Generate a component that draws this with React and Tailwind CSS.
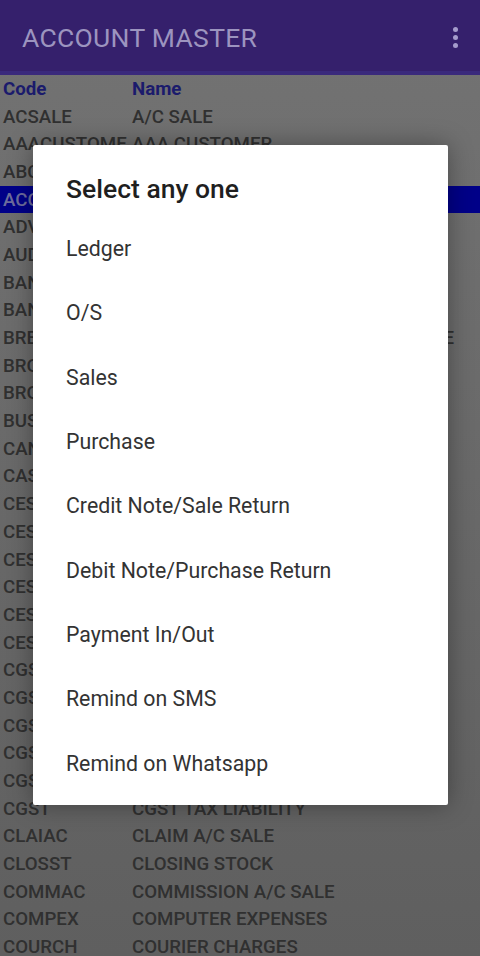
import React from "react";

const rows = [
  ["ACSALE", "A/C SALE"],
  ["AAACUSTOME", "AAA CUSTOMER"],
  ["ABCDEF", "ABC TRADERS"],
  ["ACCINT", "ACCRUED INTEREST"],
  ["ADVEXP", "ADVERTISEMENT EXP"],
  ["AUDFEE", "AUDIT FEES"],
  ["BANKCH", "BANK CHARGES"],
  ["BANKIN", "BANK INTEREST"],
  ["BREAKG", "BREAKAGES AND\u00A0 LEAKAGE EXPENSE"],
  ["BROKER", "BROKERAGE"],
  ["BROKRG", "BROKERAGE PAID"],
  ["BUSPRO", "BUSINESS PROMOTION"],
  ["CANTEE", "CANTEEN EXPENSES"],
  ["CASH", "CASH"],
  ["CESS01", "CESS PAYABLE"],
  ["CESS02", "CESS RECEIVABLE"],
  ["CESS03", "CESS INPUT"],
  ["CESS04", "CESS OUTPUT"],
  ["CESS05", "CESS TAX"],
  ["CESS06", "CESS LIABILITY"],
  ["CGST01", "CGST PAYABLE"],
  ["CGST02", "CGST RECEIVABLE"],
  ["CGST03", "CGST INPUT"],
  ["CGST04", "CGST OUTPUT"],
  ["CGST05", "CGST TAX"],
  ["CGST", "CGST TAX LIABILITY"],
  ["CLAIAC", "CLAIM A/C SALE"],
  ["CLOSST", "CLOSING STOCK"],
  ["COMMAC", "COMMISSION A/C SALE"],
  ["COMPEX", "COMPUTER EXPENSES"],
  ["COURCH", "COURIER CHARGES"],
];

const options = [
  "Ledger",
  "O/S",
  "Sales",
  "Purchase",
  "Credit Note/Sale Return",
  "Debit Note/Purchase Return",
  "Payment In/Out",
  "Remind on SMS",
  "Remind on Whatsapp",
];

export default function App() {
  return (
    <div
      className="relative h-[956px] w-[480px] overflow-hidden bg-gradient-to-b from-[#737373] to-[#5f5f5f]"
      style={{ fontFamily: "Roboto, 'Noto Sans', sans-serif" }}
    >
      {/* app bar */}
      <div className="flex h-[75px] items-center justify-between bg-[#35206c] pl-[22px] pr-[22px] pt-[4px] border-b-[4px] border-[#3a2a7c]">
        <span className="text-[26.5px] tracking-[0.3px] text-[#9c94bf]">ACCOUNT MASTER</span>
        <div className="flex flex-col gap-[3px]">
          <span className="h-[5px] w-[5px] rounded-full bg-[#a59ccc]" />
          <span className="h-[5px] w-[5px] rounded-full bg-[#a59ccc]" />
          <span className="h-[5px] w-[5px] rounded-full bg-[#a59ccc]" />
        </div>
      </div>

      {/* list */}
      <div className="text-[18.7px] font-medium text-[#303030]">
        <div className="flex h-[27.7px] items-center pl-[3px] font-bold text-[#1b1b6c]">
          <span className="w-[129px]">Code</span>
          <span>Name</span>
        </div>
        {rows.map(([code, name], i) => (
          <div
            key={i}
            className={
              i === 3
                ? "flex h-[27.7px] items-center whitespace-nowrap bg-[#000088] pl-[3px] text-[#6c6c9c]"
                : "flex h-[27.7px] items-center whitespace-nowrap pl-[3px]"
            }
          >
            <span className="w-[129px] shrink-0 overflow-visible">{code}</span>
            <span>{name}</span>
          </div>
        ))}
      </div>

      {/* dialog */}
      <div className="absolute left-[33px] top-[145px] h-[660px] w-[415px] rounded-[2px] bg-white shadow-[0_0_24px_rgba(0,0,0,0.35)]">
        <div className="pl-[33px] pt-[28px] pb-[12px] text-[26.5px] leading-[32px] font-medium text-[#1f1f1f]">
          Select any one
        </div>
        <div className="flex flex-col">
          {options.map((o) => (
            <div key={o} className="flex h-[64.3px] items-center pl-[33px] text-[21.3px] text-[#333]">
              {o}
            </div>
          ))}
        </div>
      </div>
    </div>
  );
}
